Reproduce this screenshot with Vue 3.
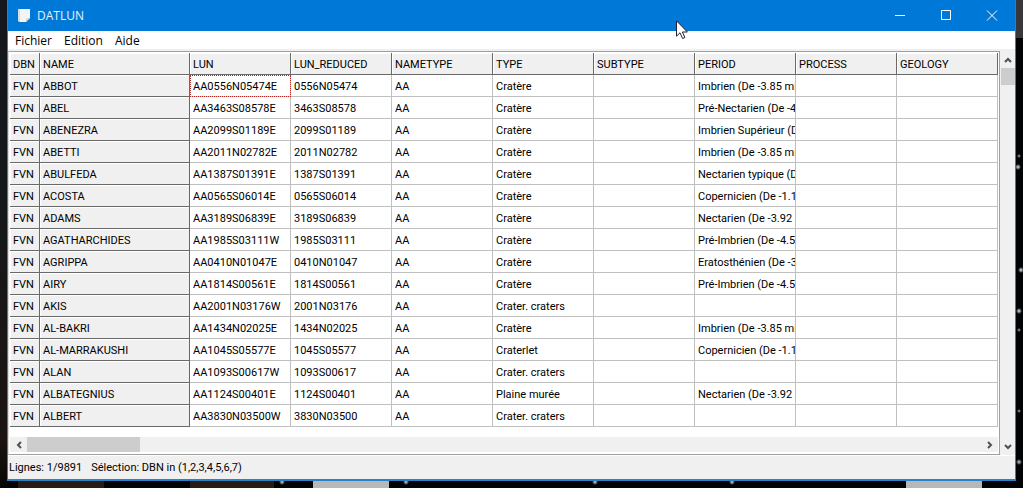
<script setup>
const menus = ['Fichier', 'Edition', 'Aide']
const columns = ['DBN', 'NAME', 'LUN', 'LUN_REDUCED', 'NAMETYPE', 'TYPE', 'SUBTYPE', 'PERIOD', 'PROCESS', 'GEOLOGY']

const craters = [
  ['ABBOT', '0556N05474', 'E', 'Cratère', 'Imbrien (De -3.85 mi'],
  ['ABEL', '3463S08578', 'E', 'Cratère', 'Pré-Nectarien (De -4'],
  ['ABENEZRA', '2099S01189', 'E', 'Cratère', 'Imbrien Supérieur (D'],
  ['ABETTI', '2011N02782', 'E', 'Cratère', 'Imbrien (De -3.85 mi'],
  ['ABULFEDA', '1387S01391', 'E', 'Cratère', 'Nectarien typique (D'],
  ['ACOSTA', '0565S06014', 'E', 'Cratère', 'Copernicien (De -1.1'],
  ['ADAMS', '3189S06839', 'E', 'Cratère', 'Nectarien (De -3.92'],
  ['AGATHARCHIDES', '1985S03111', 'W', 'Cratère', 'Pré-Imbrien (De -4.5'],
  ['AGRIPPA', '0410N01047', 'E', 'Cratère', 'Eratosthénien (De -3'],
  ['AIRY', '1814S00561', 'E', 'Cratère', 'Pré-Imbrien (De -4.5'],
  ['AKIS', '2001N03176', 'W', 'Crater. craters', ''],
  ['AL-BAKRI', '1434N02025', 'E', 'Cratère', 'Imbrien (De -3.85 mi'],
  ['AL-MARRAKUSHI', '1045S05577', 'E', 'Craterlet', 'Copernicien (De -1.1'],
  ['ALAN', '1093S00617', 'W', 'Crater. craters', ''],
  ['ALBATEGNIUS', '1124S00401', 'E', 'Plaine murée', 'Nectarien (De -3.92'],
  ['ALBERT', '3830N03500', 'W', 'Crater. craters', ''],
]

const rows = craters.map(([name, lun, side, type, period]) => ({
  name,
  cells: ['AA' + lun + side, lun, 'AA', type, '', period, '', ''],
}))
</script>

<template>
  <div class="desktop">
    <main class="window">
      <header class="titlebar">
        <svg class="app-icon" width="16" height="16" viewBox="0 0 16 16" aria-hidden="true">
          <path d="M2 1h12v9l-4 4H4L2 13z" fill="#f4f4f4" />
          <path d="M2 1h2v13L2 13z" fill="#cfdde6" />
          <path d="M14 10l-4 4v-3z" fill="#c3cfd8" />
        </svg>
        <h1>DATLUN</h1>
        <div class="controls">
          <button type="button" aria-label="Réduire">
            <svg width="12" height="12" viewBox="0 0 12 12"><path d="M1 5.500h10" /></svg>
          </button>
          <button type="button" aria-label="Agrandir">
            <svg width="12" height="12" viewBox="0 0 12 12"><path d="M1.500 .5h9v9h-9z" /></svg>
          </button>
          <button type="button" aria-label="Fermer">
            <svg width="12" height="12" viewBox="0 0 12 12"><path d="M1 .5l10 10M11 .5L1 10.500" /></svg>
          </button>
        </div>
      </header>

      <nav class="menubar">
        <button v-for="m in menus" :key="m" type="button">{{ m }}</button>
      </nav>

      <div class="workspace">
        <section class="grid-box">
          <div class="grid-view">
            <table>
              <colgroup>
                <col class="c-dbn" />
                <col class="c-name" />
                <col v-for="n in 8" :key="n" class="c-field" />
              </colgroup>
              <thead>
                <tr>
                  <th v-for="c in columns" :key="c" scope="col">{{ c }}</th>
                </tr>
              </thead>
              <tbody>
                <tr v-for="(r, i) in rows" :key="r.name">
                  <th>FVN</th>
                  <th scope="row">{{ r.name }}</th>
                  <td v-for="(v, j) in r.cells" :key="j" :class="{ selected: i === 0 && j === 0 }">
                    <div class="clip">{{ v }}</div>
                  </td>
                </tr>
              </tbody>
            </table>
          </div>
          <div class="hscroll">
            <button type="button" aria-label="Défiler à gauche">
              <svg width="8" height="8" viewBox="0 0 8 8"><path d="M6 1L3 4l3 3" /></svg>
            </button>
            <div class="hthumb"></div>
            <button type="button" aria-label="Défiler à droite">
              <svg width="8" height="8" viewBox="0 0 8 8"><path d="M2 1l3 3-3 3" /></svg>
            </button>
          </div>
        </section>
        <div class="vscroll">
          <button type="button" aria-label="Défiler vers le haut">
            <svg width="8" height="8" viewBox="0 0 8 8"><path d="M1 6l3-3 3 3" /></svg>
          </button>
          <div class="vthumb"></div>
          <button type="button" aria-label="Défiler vers le bas">
            <svg width="8" height="8" viewBox="0 0 8 8"><path d="M1 2l3 3 3-3" /></svg>
          </button>
        </div>
      </div>

      <footer class="status">
        <span>Lignes: 1/9891</span>
        <span>Sélection: DBN in (1,2,3,4,5,6,7)</span>
      </footer>
    </main>

    <svg class="pointer" width="13" height="20" viewBox="0 0 13 20" aria-hidden="true">
      <path d="M.5.8v15.400l3.500-3.400 2.600 5.700 2.300-1-2.500-5.500h5z" fill="#fff" stroke="#1c2030" />
    </svg>
  </div>
</template>

<style>
html,
body {
  margin: 0;
  background: #020304;
}
</style>

<style scoped>
.desktop {
  position: relative;
  box-sizing: border-box;
  min-height: 100vh;
  display: flex;
  padding: 0 7px 7px;
  background:
    radial-gradient(circle, #aab2b8 0, transparent 2px) calc(100% + 2px) 150px / 12px 12px no-repeat,
    radial-gradient(circle, #dfe8ee 0, transparent 3px) calc(100% + 1px) 161px / 12px 12px no-repeat,
    radial-gradient(circle, #dfe8ee 0, transparent 3px) calc(100% + 4px) 264px / 12px 12px no-repeat,
    radial-gradient(circle, #dfe8ee 0, transparent 3px) calc(100% + 2px) 305px / 12px 12px no-repeat,
    radial-gradient(circle, #aab2b8 0, transparent 2px) calc(100% + 2px) 324px / 12px 12px no-repeat,
    radial-gradient(circle, #aab2b8 0, transparent 2px) calc(100% + 2px) 405px / 12px 12px no-repeat,
    radial-gradient(circle, #c4d2da 0, transparent 3px) calc(100% + 2px) 456px / 12px 12px no-repeat,
    radial-gradient(circle, #cfdde6 0, transparent 3px) 276px 100% / 12px 12px no-repeat,
    radial-gradient(circle, #cfdde6 0, transparent 3px) 400px 100% / 12px 12px no-repeat,
    radial-gradient(circle, #cfdde6 0, transparent 3px) 589px 100% / 12px 12px no-repeat,
    radial-gradient(circle, #cfdde6 0, transparent 3px) 726px 100% / 12px 12px no-repeat,
    linear-gradient(#b8b8b8, #b8b8b8) 313px 100% / 76px 7px no-repeat,
    linear-gradient(#b8b8b8, #b8b8b8) 906px 100% / 76px 7px no-repeat,
    linear-gradient(#2a1a14, #2a1a14) 18px 100% / 86px 7px no-repeat,
    linear-gradient(#2a1a14, #2a1a14) 190px 100% / 84px 7px no-repeat,
    linear-gradient(#38383a, #38383a) 100% 0 / 8px 38px no-repeat,
    linear-gradient(#14181d, #14181d 30%, #1c1511 90%, #050505) 0 0 / 7px 100% no-repeat,
    #020304;
  font: 11px/14px Roboto, "Liberation Sans", sans-serif;
  color: #000;
}
.window {
  flex: 1;
  min-width: 0;
  display: flex;
  flex-direction: column;
  border: solid #2583c6;
  border-width: 0 1px 2px;
  background: #f0f0f0;
}
button {
  border: 0;
  padding: 0;
  background: none;
  font: inherit;
  color: inherit;
}
.titlebar {
  display: flex;
  align-items: center;
  height: 31px;
  padding-left: 8px;
  background: #0078d7;
  color: #e4f1fb;
}
h1 {
  flex: 1;
  margin: 0 0 0 5px;
  font: 12px/16px "Open Sans", "Noto Sans", sans-serif;
}
.controls {
  display: flex;
}
.controls button {
  width: 46px;
  height: 31px;
  display: grid;
  place-items: center;
}
.controls path {
  fill: none;
  stroke: #fff;
}
.menubar {
  display: flex;
  gap: 12px;
  height: 18px;
  padding-left: 7px;
  background: #fff;
  font: 12px/20px "Open Sans", "Noto Sans", sans-serif;
}
.workspace {
  flex: 1;
  display: flex;
  gap: 1px;
  margin-top: 2px;
}
.grid-box {
  flex: 1;
  min-width: 0;
  display: flex;
  flex-direction: column;
  border: 1px solid #a0a0a0;
  border-left-color: #dcdcdc;
  padding: 1px 1px 2px;
  background: #fff;
}
.grid-view {
  flex: 1;
  overflow: hidden;
}
table {
  width: 988px;
  table-layout: fixed;
  border-collapse: separate;
  border-spacing: 0;
}
.c-dbn {
  width: 30px;
}
.c-name {
  width: 150px;
}
.c-field {
  width: 101px;
}
th,
td {
  box-sizing: border-box;
  height: 22px;
  padding: 2px 0 0 3px;
  border: solid #c0c0c0;
  border-width: 0 1px 1px 0;
  font-weight: 400;
  text-align: left;
  white-space: nowrap;
}
th {
  border-color: #696969;
  background: #f0f0f0;
  box-shadow: inset 1px 1px #fff;
}
.clip {
  overflow: hidden;
}
.selected {
  outline: 1px dotted #b02a2a;
  outline-offset: -1px;
}
.hscroll,
.vscroll {
  display: flex;
  background: #f0f0f0;
}
.hscroll button,
.vscroll button {
  display: grid;
  place-items: center;
  width: 17px;
  height: 15px;
}
.hscroll path,
.vscroll path {
  fill: none;
  stroke: #505050;
  stroke-width: 2;
}
.hscroll {
  height: 15px;
}
.hthumb {
  width: 113px;
  margin-right: auto;
  background: #cdcdcd;
}
.vscroll {
  flex-direction: column;
  width: 14px;
}
.vscroll button {
  width: 14px;
  height: 17px;
}
.vthumb {
  height: 17px;
  margin-bottom: auto;
  background: #cdcdcd;
}
.status {
  display: flex;
  gap: 9px;
  height: 24px;
  padding-left: 1px;
  border-top: 1px solid #fff;
  box-sizing: border-box;
  line-height: 23px;
}
.pointer {
  position: absolute;
  left: 676px;
  top: 20px;
}
</style>
